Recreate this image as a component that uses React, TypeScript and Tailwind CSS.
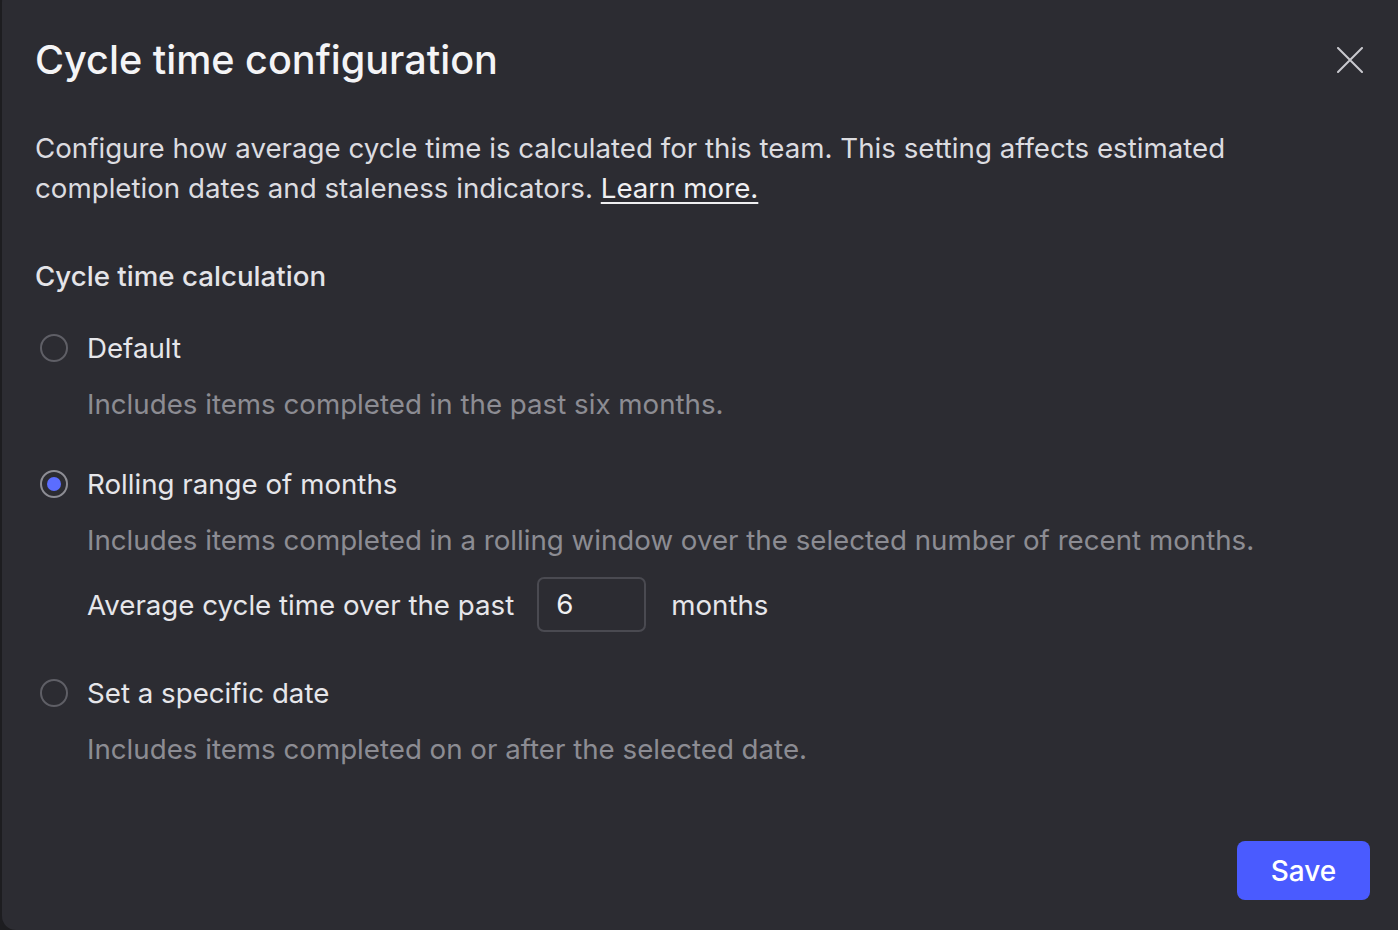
import React from "react";

function Radio({ checked }: { checked?: boolean }) {
  return (
    <div className="w-[36px] h-[36px] flex items-center justify-center shrink-0">
      <div
        className={
          "w-[28px] h-[28px] rounded-full border-2 flex items-center justify-center " +
          (checked ? "border-[#8d8d94]" : "border-[#5f5f66]")
        }
      >
        {checked && <div className="w-[14px] h-[14px] rounded-full bg-[#5b6dff]" />}
      </div>
    </div>
  );
}

export default function App() {
  return (
    <div
      className="w-[1398px] h-[930px] bg-[#1d1d20] overflow-hidden"
      style={{ fontFamily: "Inter, 'Noto Sans', sans-serif" }}
    >
      <div className="ml-[2px] mt-[-12px] w-[1410px] h-[942px] bg-[#2c2c32] rounded-[14px] pl-[33px] pr-[40px] pt-[50px] flex flex-col relative">
        <div className="flex items-center justify-between w-[1328px]">
          <h1 className="text-[39.6px] leading-[44px] font-medium text-[#f4f4f6]">
            Cycle time configuration
          </h1>
          <svg width="26" height="26" viewBox="0 0 26 26">
            <path d="M1 1 L25 25 M25 1 L1 25" stroke="#c9c9ce" strokeWidth="2" strokeLinecap="round" />
          </svg>
        </div>

        <p className="mt-[46px] text-[27.7px] leading-[40px] text-[#dcdce0] w-[1300px]">
          Configure how average cycle time is calculated for this team. This setting affects estimated
          <br />
          completion dates and staleness indicators.{" "}
          <span className="underline underline-offset-[4px] decoration-[2px] text-[#f0f0f2]">Learn more.</span>
        </p>

        <h2 className="mt-[50px] text-[27.7px] leading-[36px] font-medium text-[#e4e4e8]">
          Cycle time calculation
        </h2>

        <div className="mt-[36px] flex items-center gap-[15px] ml-[1px]">
          <Radio />
          <span className="text-[27.7px] leading-[36px] text-[#e6e6ea]">Default</span>
        </div>
        <p className="mt-[20px] ml-[52px] text-[27.7px] leading-[36px] text-[#8c8c93]">
          Includes items completed in the past six months.
        </p>

        <div className="mt-[44px] flex items-center gap-[15px] ml-[1px]">
          <Radio checked />
          <span className="text-[27.7px] leading-[36px] text-[#e6e6ea]">Rolling range of months</span>
        </div>
        <p className="mt-[20px] ml-[52px] text-[27.7px] leading-[36px] text-[#8c8c93]">
          Includes items completed in a rolling window over the selected number of recent months.
        </p>
        <div className="mt-[19px] ml-[52px] flex items-center">
          <span className="text-[27.7px] leading-[36px] text-[#e6e6ea]">Average cycle time over the past</span>
          <div className="ml-[23px] w-[109px] h-[55px] border-2 border-[#4a4a51] rounded-[7px] flex items-center pl-[17px] text-[27.7px] text-[#f0f0f2]">
            6
          </div>
          <span className="ml-[25px] text-[27.7px] leading-[36px] text-[#e6e6ea]">months</span>
        </div>

        <div className="mt-[43px] flex items-center gap-[15px] ml-[1px]">
          <Radio />
          <span className="text-[27.7px] leading-[36px] text-[#e6e6ea]">Set a specific date</span>
        </div>
        <p className="mt-[20px] ml-[52px] text-[27.7px] leading-[36px] text-[#8c8c93]">
          Includes items completed on or after the selected date.
        </p>

        <div className="mt-[74px] flex justify-end w-[1335px]">
          <button className="w-[133px] h-[59px] rounded-[8px] bg-[#4a5bff] text-white text-[28px] font-medium">
            Save
          </button>
        </div>
      </div>
    </div>
  );
}
